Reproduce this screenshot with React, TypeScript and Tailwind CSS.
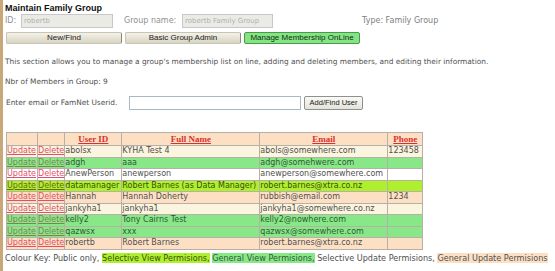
const members = [
  { id: 'abolsx', name: 'KYHA Test 4', email: 'abols@somewhere.com', phone: '123458', kind: 'public' },
  { id: 'adgh', name: 'aaa', email: 'adgh@somehwere.com', phone: '', kind: 'gview' },
  { id: 'AnewPerson', name: 'anewperson', email: 'anewperson@somewhere.com', phone: '', kind: 'supdate' },
  { id: 'datamanager', name: 'Robert Barnes (as Data Manager)', email: 'robert.barnes@xtra.co.nz', phone: '', kind: 'sview' },
  { id: 'Hannah', name: 'Hannah Doherty', email: 'rubbish@email.com', phone: '1234', kind: 'gupdate' },
  { id: 'jankyha1', name: 'jankyha1', email: 'jankyha1@somewhere.co.nz', phone: '', kind: 'public' },
  { id: 'kelly2', name: 'Tony Cairns Test', email: 'kelly2@nowhere.com', phone: '', kind: 'gview' },
  { id: 'qazwsx', name: 'xxx', email: 'qazwsx@somewhere.com', phone: '', kind: 'gview' },
  { id: 'robertb', name: 'Robert Barnes', email: 'robert.barnes@xtra.co.nz', phone: '', kind: 'gupdate' },
]

const rowStyle: Record<string, { bg: string; link: string; text: string }> = {
  public: { bg: 'bg-[#fbf4de]', link: 'text-[#e0506a]', text: 'text-[#505050]' },
  gview: { bg: 'bg-[#88e888]', link: 'text-[#7c8450]', text: 'text-[#2f5a35]' },
  supdate: { bg: 'bg-white', link: 'text-[#e0506a]', text: 'text-[#505050]' },
  sview: { bg: 'bg-[#aef02c]', link: 'text-[#6a6a10]', text: 'text-[#3a5010]' },
  gupdate: { bg: 'bg-[#fde0c4]', link: 'text-[#e0506a]', text: 'text-[#505050]' },
}

function XpButton({ label, active }: { label: string; active?: boolean }) {
  return (
    <div
      className={
        'w-[116px] h-[12px] flex items-center justify-center rounded-[2px] border whitespace-nowrap font-[\'Liberation_Sans\',sans-serif] text-[8px] leading-none ' +
        (active
          ? 'bg-[#84e484] border-[#4a9a4a] text-[#103010]'
          : 'bg-gradient-to-b from-[#f4f2e8] to-[#d8d4c2] border-[#c8c4b4] border-r-[#8c8878] text-[#202020]')
      }
    >
      {label}
    </div>
  )
}

export default function App() {
  return (
    <div className="min-h-[271px] w-[555px] bg-white border-l-[3px] border-[#c8a878] font-['DejaVu_Sans',sans-serif] text-[#505050]">
      <div className="pl-[2px] pt-[3px]">
        <h1 className="font-['Liberation_Sans',sans-serif] font-bold text-[9px] leading-[10px] text-[#101010]">
          Maintain Family Group
        </h1>

        <div className="mt-[1px] h-[14px] flex items-center text-[8px]">
          <span className="w-[16px] text-[#909090]">ID:</span>
          <div className="w-[92px] h-[14px] border border-[#c8c8c8] bg-[#ebebe6] text-[7px] text-[#b0b0b0] flex items-center px-[2px]">
            robertb
          </div>
          <span className="ml-[11px] w-[58px] text-[#909090]">Group name:</span>
          <div className="w-[91px] h-[14px] border border-[#c8c8c8] bg-[#ebebe6] text-[7px] text-[#b0b0b0] flex items-center px-[2px]">
            robertb Family Group
          </div>
          <span className="ml-[89px] text-[#808080]">Type: Family Group</span>
        </div>

        <div className="mt-[4px] flex gap-[3px] pl-[1px]">
          <XpButton label="New/Find" />
          <XpButton label="Basic Group Admin" />
          <XpButton label="Manage Membership OnLine" active />
        </div>

        <p className="mt-[13px] text-[7.4px] leading-[10px] whitespace-nowrap">
          This section allows you to manage a group's membership list on line, adding and deleting members, and editing their information.
        </p>
        <p className="mt-[10px] text-[7.4px] leading-[10px]">Nbr of Members in Group: 9</p>

        <div className="mt-[9px] flex items-center h-[14px] pl-[1px] text-[7.4px]">
          <span className="w-[123px]">Enter email or FamNet Userid.</span>
          <div className="w-[172px] h-[14px] border border-[#a8b8c8] bg-white" />
          <div className="ml-[3px] w-[59px] h-[14px] flex items-center justify-center border border-[#909090] rounded-[2px] bg-gradient-to-b from-[#fafaf6] to-[#e4e2da] text-[7.5px] text-[#202020] font-['Liberation_Sans',sans-serif]">
            Add/Find User
          </div>
        </div>

        <table className="mt-[22px] ml-[1px] border-collapse border border-[#a8a098] text-[8px] leading-[10px]">
          <colgroup>
            <col className="w-[31px]" />
            <col className="w-[27px]" />
            <col className="w-[57px]" />
            <col className="w-[138px]" />
            <col className="w-[128px]" />
            <col className="w-[35px]" />
          </colgroup>
          <thead>
            <tr className="h-[13px] bg-[#fde0c4]">
              <th className="border border-[#b8b0a8]" />
              <th className="border border-[#b8b0a8]" />
              {['User ID', 'Full Name', 'Email', 'Phone'].map((h) => (
                <th
                  key={h}
                  className="border border-[#b8b0a8] font-['Liberation_Serif',serif] font-bold text-[9px] underline text-[#d83030] text-center"
                >
                  {h}
                </th>
              ))}
            </tr>
          </thead>
          <tbody>
            {members.map((m) => {
              const s = rowStyle[m.kind]
              return (
                <tr key={m.id} className={'h-[11.5px] ' + s.bg}>
                  <td className={'border border-[#b8b0a8] underline px-0 ' + s.link}>Update</td>
                  <td className={'border border-[#b8b0a8] underline px-0 ' + s.link}>Delete</td>
                  <td className={'border border-[#b8b0a8] whitespace-nowrap ' + s.text}>{m.id}</td>
                  <td className={'border border-[#b8b0a8] whitespace-nowrap ' + s.text}>{m.name}</td>
                  <td className={'border border-[#b8b0a8] whitespace-nowrap ' + s.text}>{m.email}</td>
                  <td className={'border border-[#b8b0a8] whitespace-nowrap ' + s.text}>{m.phone}</td>
                </tr>
              )
            })}
          </tbody>
        </table>

        <p className="mt-[3px] text-[8.1px] leading-[10px] whitespace-nowrap">
          Colour Key: Public only, <span className="bg-[#aef02c] text-[#3a5010]">Selective View Permisions,</span>{' '}
          <span className="bg-[#88e888] text-[#2f5a35]">General View Permisions,</span> Selective Update Permisions,{' '}
          <span className="bg-[#fde0c4]">General Update Permisions</span>
        </p>
      </div>
    </div>
  )
}
